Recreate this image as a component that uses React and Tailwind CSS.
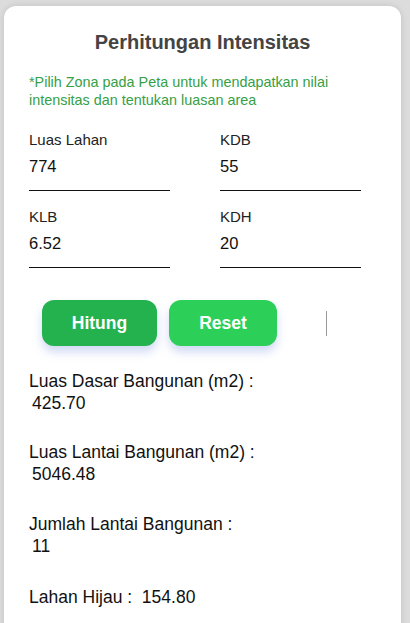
import React from "react";

function Field({ label, value }) {
  return (
    <div className="w-[141px]">
      <div className="text-[15px] leading-[18px] text-[#222]">{label}</div>
      <div className="h-[42px] border-b-[1.5px] border-[#111] pt-[3px] text-[16.5px] leading-[28px] text-[#111]">
        {value}
      </div>
    </div>
  );
}

export default function App() {
  return (
    <div
      className="h-[623px] w-[410px] overflow-hidden bg-[#dcdcdc] pl-[4px] pt-[6px]"
      style={{ fontFamily: '"Liberation Sans", Arial, sans-serif' }}
    >
      <div className="h-[640px] w-[397px] rounded-[12px] bg-white px-[25px] pt-[25px] shadow-[0_0_6px_rgba(0,0,0,0.12)]">
        <h2 className="text-center text-[20px] font-bold leading-[22px] text-[#444]">
          Perhitungan Intensitas
        </h2>
        <p className="mt-[20px] text-[14.4px] leading-[18px] text-[#36a046]">
          *Pilih Zona pada Peta untuk mendapatkan nilai intensitas dan tentukan luasan area
        </p>
        <div className="mt-[22px] flex gap-[50px]">
          <Field label="Luas Lahan" value="774" />
          <Field label="KDB" value="55" />
        </div>
        <div className="mt-[17px] flex gap-[50px]">
          <Field label="KLB" value="6.52" />
          <Field label="KDH" value="20" />
        </div>
        <div className="mt-[32px] flex items-center pl-[13px]">
          <button className="h-[46px] w-[115px] rounded-[12px] bg-[#24b24e] text-[17.5px] font-bold text-white shadow-[0_6px_10px_rgba(120,150,220,0.35)]">
            Hitung
          </button>
          <button className="ml-[12px] h-[46px] w-[108px] rounded-[12px] bg-[#2ccf57] text-[17.5px] font-bold text-white shadow-[0_6px_10px_rgba(120,150,220,0.35)]">
            Reset
          </button>
          <div className="ml-[49px] h-[25px] w-[1px] bg-[#999]" />
        </div>
        <div className="mt-[24px] text-[17.5px] leading-[22px] text-[#111]">
          <div>Luas Dasar Bangunan (m2) :</div>
          <div className="pl-[3px]">425.70</div>
          <div className="mt-[27px]">Luas Lantai Bangunan (m2) :</div>
          <div className="pl-[3px]">5046.48</div>
          <div className="mt-[28px]">Jumlah Lantai Bangunan :</div>
          <div className="pl-[3px]">11</div>
          <div className="mt-[29px]">Lahan Hijau :&nbsp; 154.80</div>
        </div>
      </div>
    </div>
  );
}
